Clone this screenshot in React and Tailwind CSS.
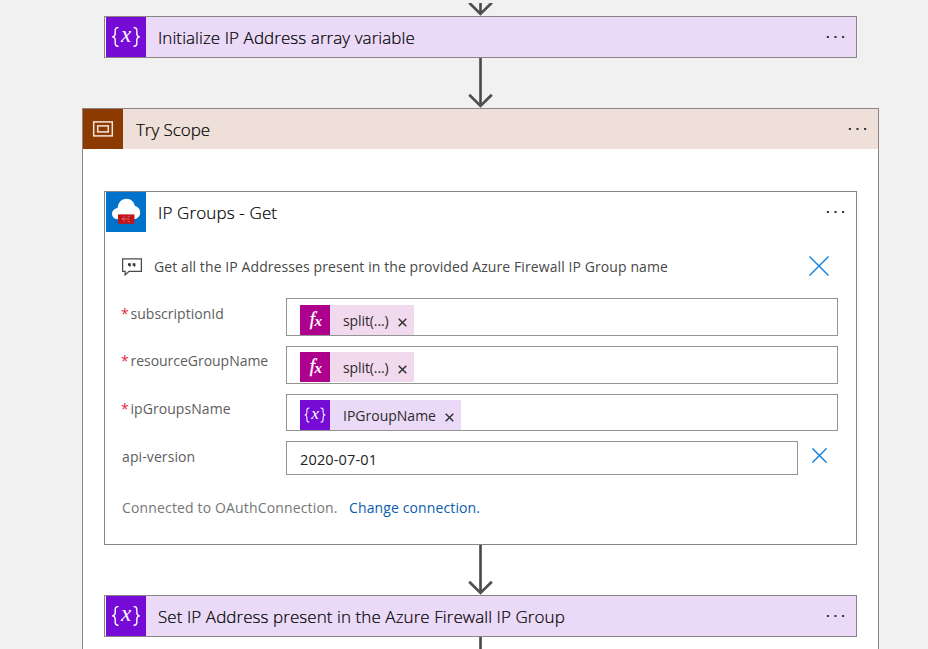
import React from "react";

function Arrow({ height, head = true, className = "" }) {
  const y = height - 2;
  return (
    <svg
      className={`block shrink-0 ${className}`}
      width="26"
      height={height}
      viewBox={`0 0 26 ${height}`}
      fill="none"
    >
      <path d={`M13.5 0V${head ? y : height}`} stroke="#6a6a6a" strokeWidth="3" />
      <path d={`M13.5 0V${head ? y : height}`} stroke="#484848" strokeWidth="1" />
      {head && <path d={`M2.2 ${y - 11.2}L13.5 ${y - 0.1}L24.8 ${y - 11.2}`} stroke="#505050" strokeWidth="2.8" />}
    </svg>
  );
}

function Dots() {
  return (
    <svg className="block shrink-0" width="20" height="4" viewBox="0 0 20 4" fill="#3c3c3c">
      <rect x="0.8" y="1" width="2.2" height="2" />
      <rect x="8.4" y="1" width="2.2" height="2" />
      <rect x="16" y="1" width="2.2" height="2" />
    </svg>
  );
}

function VariableIcon({ size }) {
  return (
    <svg className="block shrink-0 bg-[#770bd6]" width={size} height={size} viewBox="0 0 40 40">
      <g fill="none" stroke="#fff" strokeLinecap="round" strokeLinejoin="round">
        <path
          d="M12 10.6C9.8 10.6 9.2 11.5 9.2 13.3V16.6C9.2 18.6 8.4 19.7 6.6 19.9C8.4 20.1 9.2 21.2 9.2 23.2V26.6C9.2 28.4 9.8 29.3 12 29.3"
          strokeWidth="1.4"
        />
        <path
          d="M28 10.6C30.2 10.6 30.8 11.5 30.8 13.3V16.6C30.8 18.6 31.6 19.7 33.4 19.9C31.6 20.1 30.8 21.2 30.8 23.2V26.6C30.8 28.4 30.2 29.3 28 29.3"
          strokeWidth="1.4"
        />
      </g>
      <text x="20.2" y="24.8" textAnchor="middle" fill="#fff" className="font-['Liberation_Serif',serif] text-[23px] italic">
        x
      </text>
    </svg>
  );
}

function FunctionIcon() {
  return (
    <svg className="block shrink-0 bg-[#ad008c]" width="30" height="30" viewBox="0 0 30 30" fill="#fff">
      <text
        x="9.7"
        y="20.2"
        stroke="#fff"
        strokeWidth=".35"
        className="font-['Liberation_Serif',serif] text-[18.5px] italic"
      >
        f
      </text>
      <text x="14.6" y="21.2" className="font-['Liberation_Serif',serif] text-[15px] font-bold italic">
        x
      </text>
    </svg>
  );
}

function ScopeIcon() {
  return (
    <svg className="block shrink-0 bg-[#8c3a00]" width="40" height="40" viewBox="0 0 40 40" fill="none" stroke="#f3e6dd">
      <rect x="10.7" y="12.9" width="18.6" height="14" strokeWidth="1.5" />
      <rect x="14.7" y="16.9" width="10.6" height="6" strokeWidth="1.5" />
    </svg>
  );
}

function FirewallIcon() {
  return (
    <svg className="block shrink-0 bg-[#0072c9]" width="40" height="40" viewBox="0 0 40 40">
      <path
        d="M11.5 27.2C8.2 27 6 24.7 6 21.7C6 18.7 8.4 16.3 11.6 15.9C12 10.7 15.6 6.8 20.4 6.8C24.7 6.8 28 9.6 28.9 13.9C32 14.4 34.2 17 34.2 20.5C34.2 24.4 31.4 27.2 27.6 27.2Z"
        fill="#fff"
      />
      <rect x="12" y="22.4" width="16.4" height="9.4" fill="#c8161d" />
      <path d="M12 25.5H28.4M12 28.6H28.4M16 22.4V25.5M21 22.4V25.5M18 25.5V28.6M24 25.5V28.6M16 28.6V31.8M21 28.6V31.8" stroke="#a51218" strokeWidth=".5" />
      <path d="M16 27H23.5M18.7 24.7L16 27L18.7 29.3M21.5 24.7H24M21.5 29.3H24" stroke="#e5777b" strokeWidth=".8" fill="none" />
    </svg>
  );
}

function CommentIcon() {
  return (
    <svg className="block shrink-0" width="21" height="18" viewBox="0 0 21 18" fill="none">
      <path d="M.6 .8H19.4V13.3H7L3.2 16.9V13.3H.6Z" stroke="#4a4a4a" strokeWidth="1.3" />
      <path d="M6 5.2H8.8V8L7.5 9.2V7.8H6ZM10.6 5.2H13.4V8L12.1 9.2V7.8H10.6Z" fill="#333" />
    </svg>
  );
}

function Cross({ size }) {
  return (
    <svg className="block shrink-0" width={size} height={size} viewBox="0 0 20 20" stroke="#1080dc" strokeWidth="1.4">
      <path d="M.5 .5L19.5 19.5M19.5 .5L.5 19.5" vectorEffect="non-scaling-stroke" />
    </svg>
  );
}

function Title({ children, className }) {
  return (
    <div
      className={`flex-1 text-[17px] leading-[41px] font-light whitespace-nowrap text-black [-webkit-text-stroke:0.2px_black] ${className}`}
    >
      {children}
    </div>
  );
}

function VariableCard({ title }) {
  return (
    <div className="flex h-[42px] w-[753px] shrink-0 border border-[#8a8686] bg-[#ebdaf7]">
      <div className="flex border-l border-white">
        <VariableIcon size={40} />
      </div>
      <Title className="ml-3 tracking-[0.07px]">{title}</Title>
      <div className="mt-[18px] mr-[10px]">
        <Dots />
      </div>
    </div>
  );
}

function Token({ icon, label, className, tracking }) {
  return (
    <div className={`flex h-[30px] items-center ${className}`}>
      {icon}
      <span className={`mt-px ml-[13px] flex-1 text-[14px] leading-[30px] whitespace-nowrap text-[#2b2b2b] ${tracking}`}>{label}</span>
      <svg className="mt-[5px] mr-[7px] block" width="9" height="9" viewBox="0 0 9 9" stroke="#333" strokeWidth="1.5">
        <path d="M.7 .7L8.3 8.3M8.3 .7L.7 8.3" />
      </svg>
    </div>
  );
}

function Field({ label, required, tracking, labelClass, className, children }) {
  return (
    <div className="flex">
      <div className={`flex w-[165px] shrink-0 text-[14px] whitespace-nowrap text-[#5d5d5d] ${labelClass}`}>
        {required && <span className="w-[9.5px] text-[#e8293b]">*</span>}
        <span className={tracking}>{label}</span>
      </div>
      <div className={`border border-[#949494] bg-white pl-[13px] ${className}`}>{children}</div>
    </div>
  );
}

export default function App() {
  return (
    <div className="flex h-[649px] w-[928px] flex-col overflow-hidden bg-[#f1f1f1] pt-[3px] font-['Open_Sans','Noto_Sans',sans-serif]">
      <Arrow height={13} className="ml-[467px]" />
      <div className="ml-[104px]">
        <VariableCard title="Initialize IP Address array variable" />
      </div>
      <Arrow height={50} className="ml-[467px]" />

      <section className="ml-[82px] h-[560px] w-[797px] shrink-0 border border-[#8d8585] bg-white">
        <header className="flex h-10 bg-[#eee0d9]">
          <ScopeIcon />
          <Title className="ml-[13px] tracking-[-0.05px]">Try Scope</Title>
          <div className="mt-[18px] mr-[10px]">
            <Dots />
          </div>
        </header>

        <div className="mt-[42px] ml-[21px] flex flex-col">
          <div className="h-[354px] w-[753px] border border-[#858585] bg-white">
            <div className="flex h-10 pl-px">
              <FirewallIcon />
              <Title className="ml-3 tracking-[0.13px]">IP Groups - Get</Title>
              <div className="mt-[18px] mr-[10px]">
                <Dots />
              </div>
            </div>

            <div className="mt-6 ml-[17px] flex h-5 items-start">
              <div className="mt-[2px]">
                <CommentIcon />
              </div>
              <div className="ml-[11px] w-[655px] text-[14px] leading-[21px] tracking-[0.09px] text-[#484848]">
                Get all the IP Addresses present in the provided Azure Firewall IP Group name
              </div>
              <Cross size={20} />
            </div>

            <div className="mt-[22px] ml-[16px] flex flex-col gap-[10px]">
              <Field label="subscriptionId" required tracking="tracking-[0.02px]" labelClass="leading-[32px]" className="h-[38px] w-[552px] pt-[6px]">
                <Token icon={<FunctionIcon />} label="split(...)" className="w-[114px] bg-[#f1d9ee]" tracking="tracking-[-0.1px]" />
              </Field>
              <Field label="resourceGroupName" required tracking="tracking-[-0.03px]" labelClass="leading-[30px]" className="h-[38px] w-[552px] pt-[5px]">
                <Token icon={<FunctionIcon />} label="split(...)" className="w-[114px] bg-[#f1d9ee]" tracking="tracking-[-0.1px]" />
              </Field>
              <Field label="ipGroupsName" required tracking="tracking-[0.06px]" labelClass="leading-[30px]" className="h-[37px] w-[552px] pt-[5px]">
                <Token icon={<VariableIcon size={30} />} label="IPGroupName" className="w-[161px] bg-[#ebdaf7]" tracking="tracking-[0px]" />
              </Field>
              <div className="flex">
                <Field label="api-version" tracking="ml-px tracking-[0.1px]" labelClass="leading-[32px]" className="h-[34px] w-[512px]">
                  <div className="text-[14.5px] leading-[35px] tracking-[0.15px] text-[#222]">2020-07-01</div>
                </Field>
                <div className="mt-[7px] ml-[14px]">
                  <Cross size={15} />
                </div>
              </div>
            </div>

            <div className="mt-[22px] ml-[17px] flex text-[14px] leading-[22px] whitespace-nowrap">
              <span className="w-[227px] tracking-[0.15px] text-[#767676]">Connected to OAuthConnection.</span>
              <a className="tracking-[0.12px] text-[#0a5cad]">Change connection.</a>
            </div>
          </div>

          <Arrow height={50} className="ml-[363px]" />
          <VariableCard title="Set IP Address present in the Azure Firewall IP Group" />
          <Arrow height={30} head={false} className="ml-[363px]" />
        </div>
      </section>
    </div>
  );
}
